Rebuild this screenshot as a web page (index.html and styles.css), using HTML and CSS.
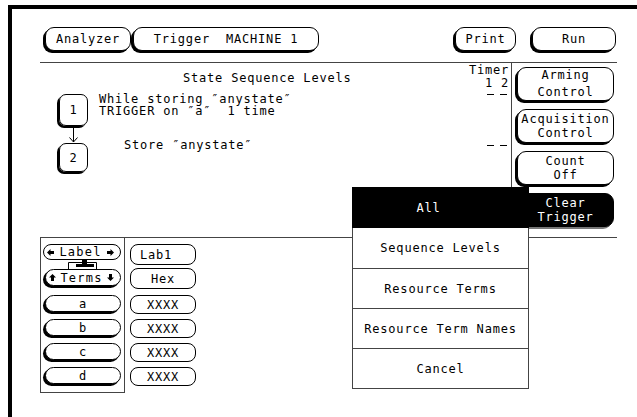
FILE: index.html
```html
<!DOCTYPE html>
<html lang="en">
<head>
  <meta charset="UTF-8" />
  <meta name="viewport" content="width=device-width, initial-scale=1.0" />
  <title>Analyzer - Trigger MACHINE 1</title>
  <link rel="stylesheet" href="styles.css">
</head>
<body>
  <div class="screen">
    <div class="topbar">
      <div class="key key-analyzer">Analyzer</div>
      <div class="key key-trigger">Trigger  MACHINE 1</div>
      <div class="key key-print">Print</div>
      <div class="key key-run">Run</div>
    </div>

    <div class="work">
      <div class="upper">
        <div class="levels">
          <div class="seq">
            <div class="seq-title">State Sequence Levels</div>
            <div class="level">
              <div class="node">1</div>
              <div class="level-text">While storing ″anystate″
TRIGGER on ″a″  1 time</div>
            </div>
            <svg class="seq-arrow" width="10" height="17" viewBox="0 0 10 17">
              <path d="M5.5 0 V16 M1.5 11.5 L5.5 16 L9.5 11.5" fill="none" stroke="#000" stroke-width="1"/>
            </svg>
            <div class="level">
              <div class="node node-short">2</div>
              <div class="level-text store">Store ″anystate″</div>
            </div>
          </div>
          <div class="timer">
            <div class="timer-line">Timer</div>
            <div class="timer-line">1 2</div>
            <div class="dashes dashes-first"><span></span><span></span></div>
            <div class="dashes dashes-second"><span></span><span></span></div>
          </div>
        </div>

        <div class="side">
          <div class="key side-key tall">Arming
Control</div>
          <div class="key side-key">Acquisition
Control</div>
          <div class="key side-key">Count
Off</div>
          <div class="key side-key active">Clear
Trigger</div>
        </div>
      </div>

      <div class="lower">
        <div class="terms-box">
          <div class="key thin label-key">
            <svg width="7" height="7" viewBox="0 0 7 7"><polygon points="0,3.5 3.5,0 3.5,2 7,2 7,5 3.5,5 3.5,7" fill="#000"/></svg>
            <span>Label</span>
            <svg width="7" height="7" viewBox="0 0 7 7"><polygon points="7,3.5 3.5,0 3.5,2 0,2 0,5 3.5,5 3.5,7" fill="#000"/></svg>
          </div>
          <svg class="link" width="29" height="9" viewBox="0 0 29 9">
            <path d="M0.5 9 V2.5 H28.5 V9" fill="none" stroke="#000" stroke-width="1"/>
            <rect x="14" y="0" width="5" height="4" fill="#000"/>
            <rect x="8" y="4" width="18" height="3" fill="#000"/>
          </svg>
          <div class="key term-key label-key terms">
            <svg width="7" height="7" viewBox="0 0 7 7"><polygon points="3.5,0 7,3.5 5,3.5 5,7 2,7 2,3.5 0,3.5" fill="#000"/></svg>
            <span>Terms</span>
            <svg width="7" height="7" viewBox="0 0 7 7"><polygon points="3.5,7 7,3.5 5,3.5 5,0 2,0 2,3.5 0,3.5" fill="#000"/></svg>
          </div>
          <div class="key term-key term-first">a</div>
          <div class="key term-key">b</div>
          <div class="key term-key">c</div>
          <div class="key term-key">d</div>
        </div>

        <div class="values">
          <div class="key thin value-key value-label">Lab1</div>
          <div class="key thin value-key value-base">Hex</div>
          <div class="key thin value-key value-first">XXXX</div>
          <div class="key thin value-key">XXXX</div>
          <div class="key thin value-key">XXXX</div>
          <div class="key thin value-key">XXXX</div>
        </div>
      </div>
    </div>

    <div class="menu">
      <div class="menu-head">All</div>
      <div class="menu-list">
        <div class="menu-item">Sequence Levels</div>
        <div class="menu-item">Resource Terms</div>
        <div class="menu-item">Resource Term Names</div>
        <div class="menu-item">Cancel</div>
      </div>
    </div>
  </div>
</body>
</html>
```

FILE: styles.css
```css
body {
  margin: 0;
  background: #fff;
  color: #000;
  font-family: "DejaVu Sans Mono", "Liberation Mono", monospace;
  font-size: 12px;
  letter-spacing: 0.8px;
}
.screen {
  position: relative;
  box-sizing: border-box;
  height: 412px;
  margin: 5px 0 0 8px;
  border-top: 4px solid #000;
  border-left: 4px solid #000;
}

/* softkeys */
.key {
  box-sizing: border-box;
  display: flex;
  align-items: center;
  justify-content: center;
  text-align: center;
  white-space: pre;
  background: #fff;
  border: 1px solid #000;
  border-radius: 9px;
  box-shadow: -2px 2px 0 #000;
}
.key.thin {
  box-shadow: none;
  border-radius: 8px;
}
.key.active {
  background: #000;
  color: #fff;
  box-shadow: -2px 2px 0 #777;
}

.topbar {
  box-sizing: border-box;
  display: flex;
  height: 53px;
  padding: 18px 21px 0 33px;
}
.topbar .key {
  height: 24px;
}
.key-analyzer { width: 86px; }
.key-trigger { width: 186px; margin-left: 2px; }
.key-print { width: 61px; margin-left: auto; }
.key-run { width: 84px; margin-left: 16px; }

.work {
  width: 577px;
  margin-left: 28px;
  border-top: 1px solid #444;
}
.upper {
  box-sizing: border-box;
  display: flex;
  height: 175px;
  border-bottom: 1px solid #444;
}

/* sequence levels */
.levels {
  box-sizing: border-box;
  display: flex;
  width: 472px;
  border-right: 1px solid #444;
}
.seq {
  flex: 1;
  padding-top: 9px;
  line-height: 12px;
}
.seq-title {
  margin-left: 143px;
}
.level {
  display: flex;
  margin-top: 9px;
}
.seq-arrow + .level {
  margin-top: 0;
}
.node {
  box-sizing: border-box;
  display: flex;
  align-items: center;
  justify-content: center;
  width: 29px;
  height: 32px;
  margin: 1px 0 0 19px;
  border: 1px solid #000;
  border-radius: 7px;
  box-shadow: -2px 2px 0 #000;
}
.node-short {
  height: 29px;
  margin-top: 0;
}
.level-text {
  margin-left: 11px;
  white-space: pre;
}
.level-text.store {
  margin: -4px 0 0 36px;
}
.seq-arrow {
  display: block;
  margin-left: 28px;
}
.timer {
  width: 50px;
  padding: 1px 2px 0 0;
  text-align: right;
  line-height: 13px;
}
.dashes {
  display: flex;
  justify-content: flex-end;
  gap: 6px;
  padding-right: 2px;
}
.dashes span {
  width: 7px;
  border-top: 1px solid #000;
}
.dashes-first { margin-top: 4px; }
.dashes-second { margin-top: 50px; }

/* right column */
.side {
  display: flex;
  flex-direction: column;
  gap: 8px;
  padding: 4px 0 0 5px;
}
.side-key {
  width: 97px;
  height: 34px;
  line-height: 14px;
}
.side-key.tall {
  line-height: 17px;
}

/* terms */
.lower {
  display: flex;
}
.terms-box {
  box-sizing: border-box;
  width: 85px;
  height: 155px;
  padding-top: 6px;
  border: 1px solid #444;
  border-top: none;
}
.label-key {
  justify-content: space-between;
  width: 78px;
  height: 16px;
  margin-left: 2px;
  padding: 0 6px 0 3px;
  letter-spacing: 1.2px;
}
.link {
  display: block;
  margin-left: 27px;
}
.term-key {
  width: 76px;
  height: 17px;
  margin: 7px 0 0 4px;
}
.term-key.terms {
  margin-top: 0;
  padding: 0 6px 0 3px;
}
.term-key.term-first {
  margin-top: 9px;
}
.values {
  margin-left: 5px;
  padding-top: 6px;
}
.value-key {
  width: 66px;
  height: 19px;
  margin-top: 5px;
}
.value-label {
  height: 21px;
  margin-top: 0;
  justify-content: flex-start;
  padding-left: 9px;
}
.value-base {
  height: 21px;
  margin-top: 3px;
}
.value-first {
  margin-top: 6px;
}

/* pop-up menu */
.menu {
  position: absolute;
  left: 340px;
  top: 178px;
  width: 177px;
  background: #fff;
}
.menu-head {
  display: flex;
  align-items: center;
  justify-content: center;
  height: 41px;
  padding-right: 24px;
  background: #000;
  color: #fff;
}
.menu-list {
  border: 1px solid #444;
  border-top: none;
}
.menu-item {
  box-sizing: border-box;
  display: flex;
  align-items: center;
  justify-content: center;
  height: 40px;
}
.menu-item + .menu-item {
  border-top: 1px solid #444;
}
```
